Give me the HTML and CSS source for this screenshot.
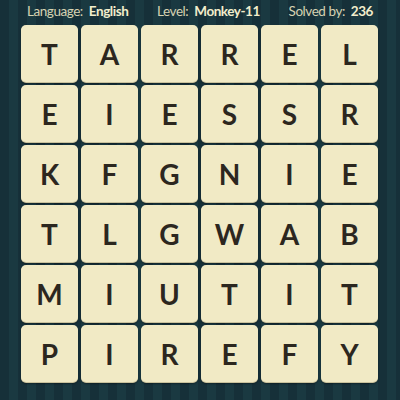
FILE: index.html
```html
<!DOCTYPE html>
<html>
<head>
<meta charset="utf-8">
<link rel="stylesheet" href="styles.css">
</head>
<body>
<div class="page">
  <div class="header">
    <span class="item">Language: <b>English</b></span>
    <span class="item">Level: <b>Monkey-11</b></span>
    <span class="item">Solved by: <b>236</b></span>
  </div>
  <div class="grid">
    <div class="tile">T</div><div class="tile">A</div><div class="tile">R</div><div class="tile">R</div><div class="tile">E</div><div class="tile">L</div>
    <div class="tile">E</div><div class="tile">I</div><div class="tile">E</div><div class="tile">S</div><div class="tile">S</div><div class="tile">R</div>
    <div class="tile">K</div><div class="tile">F</div><div class="tile">G</div><div class="tile">N</div><div class="tile">I</div><div class="tile">E</div>
    <div class="tile">T</div><div class="tile">L</div><div class="tile">G</div><div class="tile">W</div><div class="tile">A</div><div class="tile">B</div>
    <div class="tile">M</div><div class="tile">I</div><div class="tile">U</div><div class="tile">T</div><div class="tile">I</div><div class="tile">T</div>
    <div class="tile">P</div><div class="tile">I</div><div class="tile">R</div><div class="tile">E</div><div class="tile">F</div><div class="tile">Y</div>
  </div>
</div>
</body>
</html>
```
FILE: styles.css
```css
html, body {
  margin: 0;
  padding: 0;
}
body {
  width: 400px;
  height: 400px;
  overflow: hidden;
  background-color: #17323a;
  background-image: repeating-linear-gradient(90deg, #163039 0px, #163039 9px, #1a3941 9px, #1a3941 18px);
  font-family: Lato, "Open Sans", sans-serif;
}
.page {
  display: flex;
  flex-direction: column;
}
.header {
  height: 25px;
  display: flex;
  justify-content: space-between;
  align-items: center;
  padding: 0 27px 0 27px;
  box-sizing: border-box;
  color: #d6d2b2;
  font-size: 13.5px;
  letter-spacing: -0.45px;
}
.header .item {
  position: relative;
  top: -2px;
}
.header b {
  color: #f2edcc;
  font-weight: 700;
  margin-left: 3px;
}
.grid {
  display: grid;
  grid-template-columns: repeat(6, 57px);
  grid-auto-rows: 57px;
  gap: 3px;
  padding-left: 21px;
}
.tile {
  background: #f1eac5;
  border-radius: 5px;
  box-shadow: 0 1px 0 #c9c19c, 0 2px 2px rgba(0,0,0,0.35);
  display: flex;
  align-items: center;
  justify-content: center;
  color: #2c271f;
  font-size: 28px;
  font-weight: 700;
}
```
